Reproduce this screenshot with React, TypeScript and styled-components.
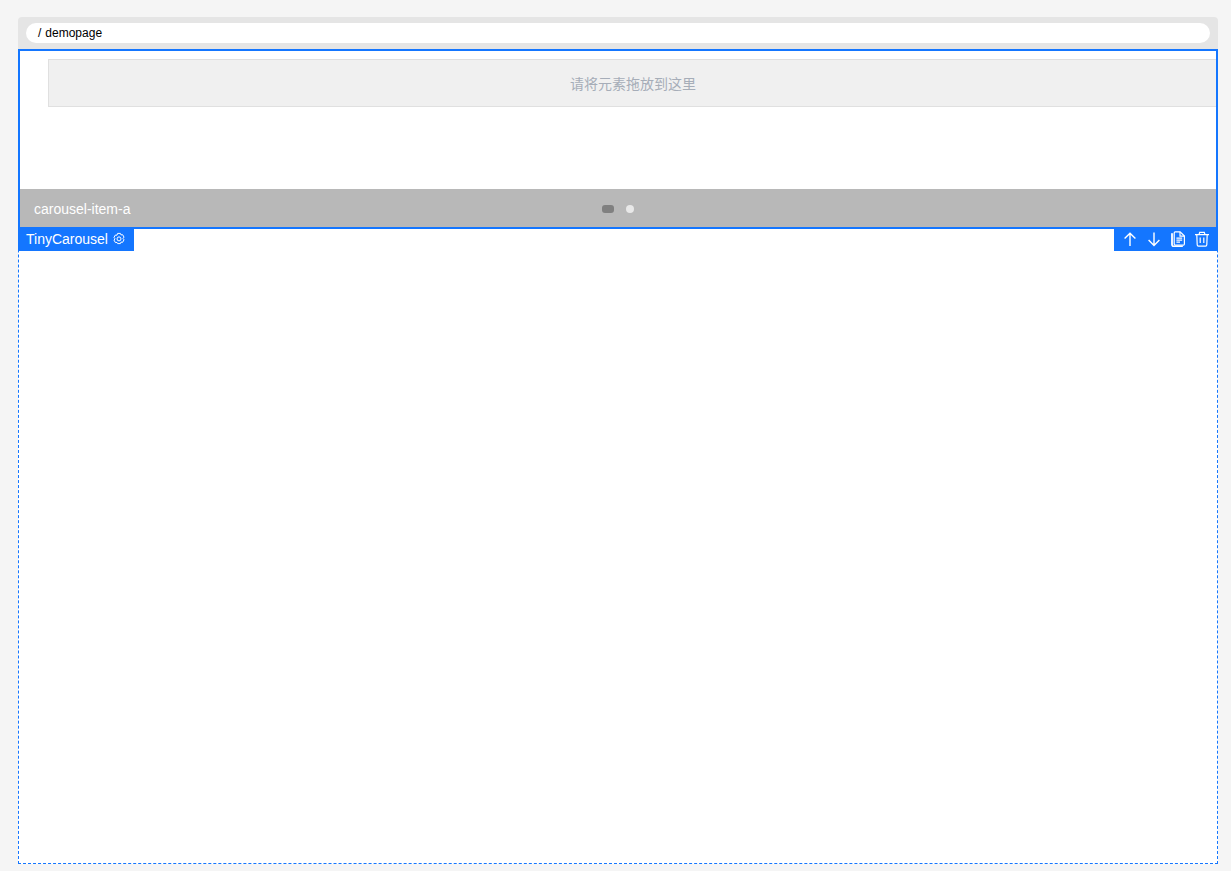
import styled, { createGlobalStyle } from "styled-components";

const GlobalStyle = createGlobalStyle`
  html, body {
    margin: 0;
    padding: 0;
    background: #f5f5f5;
    font-family: "Liberation Sans", Arial, "Noto Sans CJK SC", sans-serif;
  }
  * {
    box-sizing: border-box;
  }
`;

const Page = styled.div`
  height: 871px;
  padding: 17px 13px 7px 18px;
  overflow: hidden;
`;

const Frame = styled.div`
  width: 1200px;
  display: flex;
  flex-direction: column;
`;

const Breadcrumb = styled.div`
  height: 32px;
  padding: 6px 8px;
  background: #e5e5e5;
  border-radius: 4px 4px 0 0;
`;

const Address = styled.div`
  height: 20px;
  padding-left: 12px;
  display: flex;
  align-items: center;
  gap: 4px;
  background: #fff;
  border-radius: 10px;
  font-size: 12px;
  color: #000;
`;

const Canvas = styled.div`
  position: relative;
  height: 815px;
  background: #fff;
  border: 1px dashed #1476ff;
`;

const Carousel = styled.div`
  height: 178px;
  padding: 0 1px 1px;
  display: flex;
  flex-direction: column;
`;

const CarouselItem = styled.div`
  flex: 1;
  padding: 9px 0 0 28px;
`;

const DropZone = styled.div`
  height: 48px;
  margin-right: -2px;
  display: flex;
  align-items: center;
  justify-content: center;
  background: #f0f0f0;
  border: 1px solid #e0e0e0;
  font-size: 14px;
  color: #a6adb8;
`;

const ItemBar = styled.div`
  height: 38px;
  padding: 2px 14px 0;
  display: grid;
  grid-template-columns: 1fr auto 1fr;
  align-items: center;
  background: #b8b8b8;
  font-size: 14px;
  color: #fff;
`;

const Indicators = styled.div`
  display: flex;
  align-items: center;
  gap: 12px;
`;

const Indicator = styled.span<{ $active?: boolean }>`
  display: block;
  height: 8px;
  width: ${(p) => (p.$active ? "12px" : "8px")};
  border-radius: ${(p) => (p.$active ? "3px" : "50%")};
  background: ${(p) => (p.$active ? "#808080" : "#e8e8e8")};
`;

const Selection = styled.div`
  position: absolute;
  top: -1px;
  left: -1px;
  width: 1200px;
  height: 180px;
  border: 2px solid #1476ff;
  pointer-events: none;
`;

const NameTag = styled.div`
  position: absolute;
  top: 179px;
  left: -1px;
  height: 22px;
  width: 116px;
  padding: 0 0 2px 8px;
  display: flex;
  align-items: center;
  gap: 4px;
  background: #1476ff;
  font-size: 14px;
  color: #fff;
`;

const Actions = styled.div`
  position: absolute;
  top: 179px;
  right: -1px;
  height: 22px;
  width: 104px;
  padding: 0 0 2px 8px;
  display: flex;
  align-items: center;
  gap: 8px;
  background: #1476ff;
  color: #fff;
`;

const ActionIcon = styled.span`
  width: 16px;
  height: 16px;
  display: flex;
  align-items: center;
  justify-content: center;
`;

function GearIcon() {
  return (
    <svg width="14" height="14" viewBox="0 0 14 14" fill="none" stroke="#fff" strokeWidth="1">
      <path d="M5.6 1.4h2.8l.6 1.5 1.6-.2 1.4 2.4-1 1.4 1 1.3-1.4 2.5-1.6-.2-.6 1.5H5.6L5 10.400l-1.600.2L2 8.100l1-1.300-1-1.400 1.400-2.400 1.600.2z" strokeLinejoin="round" />
      <circle cx="7" cy="6.900" r="2" />
    </svg>
  );
}

function UpIcon() {
  return (
    <svg width="16" height="16" viewBox="0 0 16 16" fill="none" stroke="#fff" strokeWidth="1.4">
      <path d="M8 15V2.2M2.6 7.6L8 2.2l5.4 5.4" />
    </svg>
  );
}

function DownIcon() {
  return (
    <svg width="16" height="16" viewBox="0 0 16 16" fill="none" stroke="#fff" strokeWidth="1.4">
      <path d="M8 1.6v12.800M2.6 9L8 14.400 13.400 9" />
    </svg>
  );
}

function CopyIcon() {
  return (
    <svg width="16" height="16" viewBox="0 0 16 16" fill="none" stroke="#fff" strokeWidth="1.2">
      <path d="M2 2.800v10.700c0 1 .7 1.800 1.700 1.800H12" strokeWidth="1.800" strokeLinecap="round" />
      <path d="M4.200 2c0-.7.400-1.200 1-1.200h5L14.400 5v8c0 .7-.4 1.100-1 1.100H5.200c-.6 0-1-.4-1-1.100z" strokeLinejoin="round" />
      <path d="M10 1v4.200h4.300M6.400 7.200h5.800M6.400 9.200h5.800M6.400 11.200h3.600" />
    </svg>
  );
}

function TrashIcon() {
  return (
    <svg width="16" height="16" viewBox="0 0 16 16" fill="none" stroke="#fff" strokeWidth="1.200">
      <path d="M1 3.600h14M5 3.600l.7-2.200h4.600l.7 2.200" />
      <path d="M2.800 3.600l.4 10.200c0 .8.500 1.300 1.300 1.300h7c.8 0 1.300-.5 1.300-1.300l.4-10.200" />
      <path d="M6.200 6.500v5.500M9.800 6.500v5.500" />
    </svg>
  );
}

export default function App() {
  return (
    <Page>
      <GlobalStyle />
      <Frame>
        <Breadcrumb>
          <Address>
            <span>/</span>
            <span>demopage</span>
          </Address>
        </Breadcrumb>
        <Canvas>
          <Carousel>
            <CarouselItem>
              <DropZone>请将元素拖放到这里</DropZone>
            </CarouselItem>
            <ItemBar>
              <span>carousel-item-a</span>
              <Indicators>
                <Indicator $active />
                <Indicator />
              </Indicators>
            </ItemBar>
          </Carousel>
          <Selection />
          <NameTag>
            <span>TinyCarousel</span>
            <GearIcon />
          </NameTag>
          <Actions>
            <ActionIcon>
              <UpIcon />
            </ActionIcon>
            <ActionIcon>
              <DownIcon />
            </ActionIcon>
            <ActionIcon>
              <CopyIcon />
            </ActionIcon>
            <ActionIcon>
              <TrashIcon />
            </ActionIcon>
          </Actions>
        </Canvas>
      </Frame>
    </Page>
  );
}
